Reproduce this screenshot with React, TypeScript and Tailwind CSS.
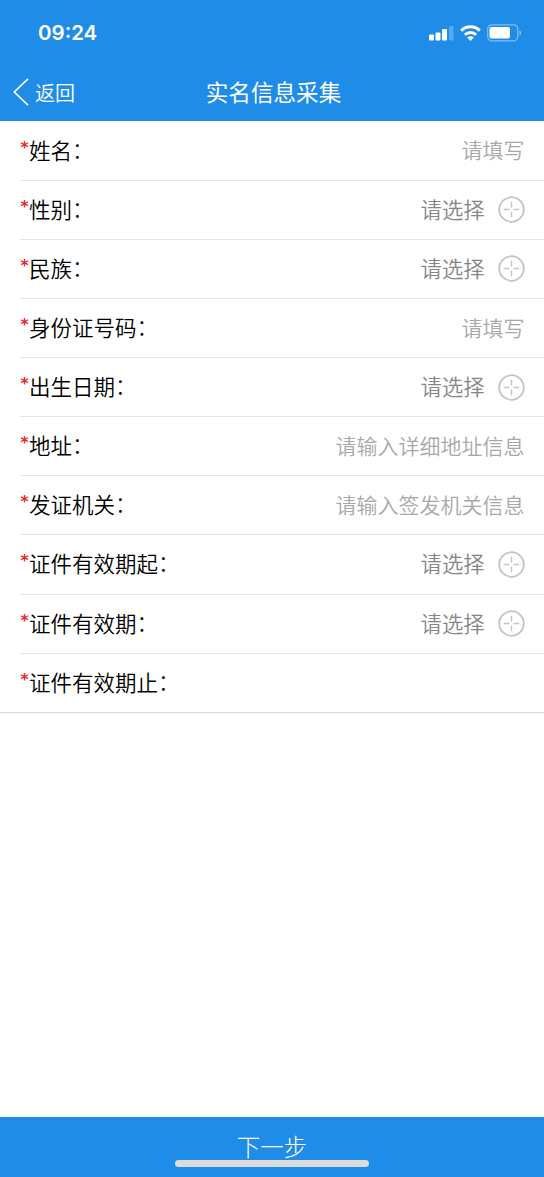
type Field = {
  label: string;
  placeholder: string;
  type: 'input' | 'select' | 'empty';
};

const FIELDS: Field[] = [
  { label: '姓名', placeholder: '请填写', type: 'input' },
  { label: '性别', placeholder: '请选择', type: 'select' },
  { label: '民族', placeholder: '请选择', type: 'select' },
  { label: '身份证号码', placeholder: '请填写', type: 'input' },
  { label: '出生日期', placeholder: '请选择', type: 'select' },
  { label: '地址', placeholder: '请输入详细地址信息', type: 'input' },
  { label: '发证机关', placeholder: '请输入签发机关信息', type: 'input' },
  { label: '证件有效期起', placeholder: '请选择', type: 'select' },
  { label: '证件有效期', placeholder: '请选择', type: 'select' },
  { label: '证件有效期止', placeholder: '', type: 'empty' },
];

const StatusBar = () => {
  return (
    <div className="flex h-[64px] items-center justify-between pr-[22px] pl-[38px]">
      <span className="pt-[2px] font-['Inter','Liberation_Sans',sans-serif] text-[20.5px] font-semibold">
        09:24
      </span>
      <div className="flex items-center pt-px">
        <svg width="25" height="16" viewBox="0 0 25 16" fill="currentColor">
          <rect x="0" y="9.5" width="5" height="6" rx="1" />
          <rect x="6.5" y="7.5" width="5" height="8" rx="1" />
          <rect x="13" y="4" width="5" height="11.5" rx="1" />
          <rect x="20" y="1" width="4.5" height="14.5" rx="1" opacity="0.25" />
        </svg>
        <svg
          className="ml-[6px]"
          width="21"
          height="16"
          viewBox="0 0 21 16"
          fill="none"
          stroke="currentColor"
          strokeWidth="2.9"
        >
          <path d="M1.2 5.6a13.2 13.2 0 0 1 18.6 0" />
          <path d="M4.9 9.8a8 8 0 0 1 11.2 0" />
          <path
            d="M10.5 16 7.2 12.6a4.6 4.6 0 0 1 6.6 0z"
            fill="currentColor"
            stroke="none"
          />
        </svg>
        <svg
          className="ml-[6px]"
          width="35"
          height="18"
          viewBox="0 0 35 18"
          fill="currentColor"
        >
          <rect
            x="0.75"
            y="0.8"
            width="30"
            height="16"
            rx="4"
            fill="none"
            stroke="currentColor"
            strokeWidth="1.2"
            opacity="0.45"
          />
          <rect x="2.5" y="3" width="20.5" height="11.5" rx="2" />
          <path d="M32.5 6.2c2.2 1 2.2 4.6 0 5.6z" opacity="0.45" />
        </svg>
      </div>
    </div>
  );
};

const PickIcon = () => {
  return (
    <svg
      className="ml-[13px]"
      width="27"
      height="27"
      viewBox="0 0 27 27"
      fill="none"
      stroke="#c4c4c8"
      strokeWidth="1.8"
    >
      <circle cx="13.5" cy="13.5" r="12.3" />
      <path
        d="M13.5 5.8v5.7M13.5 15.5v5.7M5.8 13.5h5.7M15.5 13.5h5.7"
        strokeWidth="1.4"
      />
    </svg>
  );
};

const App = () => {
  return (
    <div
      lang="zh-CN"
      className="flex h-[1177px] w-[544px] flex-col bg-white font-['Noto_Sans_CJK_SC',sans-serif]"
    >
      <header className="h-[121px] bg-[#1f8ce8] text-white">
        <StatusBar />
        <div className="grid h-[55px] grid-cols-3 items-center">
          <div className="flex items-center pl-[13px]">
            <svg
              width="16"
              height="28"
              viewBox="0 0 16 28"
              fill="none"
              stroke="currentColor"
              strokeWidth="1.7"
            >
              <path d="M15 .8 1.3 14 15 27.2" />
            </svg>
            <span className="ml-[6px] pt-[2px] text-[20px] leading-7 font-[350]">
              返回
            </span>
          </div>
          <h1 className="pl-[3px] text-center text-[22.6px] leading-8 font-normal whitespace-nowrap">
            实名信息采集
          </h1>
        </div>
      </header>
      <ul className="border-b border-[#d9d9d9] pt-[0.5px]">
        {FIELDS.map((field) => (
          <li
            key={field.label}
            className="ml-[20px] flex h-[59.14px] items-center justify-between border-b border-[#e4e4e4] pr-[19.5px] last:h-[58.5px] last:border-b-0"
          >
            <div className="flex pb-[2px] text-[21.5px] leading-8 font-[350] text-black">
              <span className="w-[9px] pl-[0.5px] font-['DejaVu_Sans',sans-serif] text-[15.5px] leading-[29px] font-bold text-[#e8262a]">
                *
              </span>
              <span>{field.label}</span>
              <span className="leading-[29px] font-light">：</span>
            </div>
            {field.type === 'input' && (
              <span className="pb-[2.5px] text-[21px] leading-8 font-[350] text-[#a8a8a8]">
                {field.placeholder}
              </span>
            )}
            {field.type === 'select' && (
              <div className="flex items-center">
                <span className="pb-[2px] text-[21.3px] leading-8 font-[350] text-[#868686]">
                  {field.placeholder}
                </span>
                <PickIcon />
              </div>
            )}
          </li>
        ))}
      </ul>
      <footer className="mt-auto flex h-[60px] flex-col items-center bg-[#1f8ce8] text-white">
        <button className="mt-[13px] h-[30px] text-[23.5px] leading-[32px] font-light">
          下一步
        </button>
        <div className="h-[7px] w-[194px] rounded-full bg-[#dcdcdc]" />
      </footer>
    </div>
  );
};

export default App;
